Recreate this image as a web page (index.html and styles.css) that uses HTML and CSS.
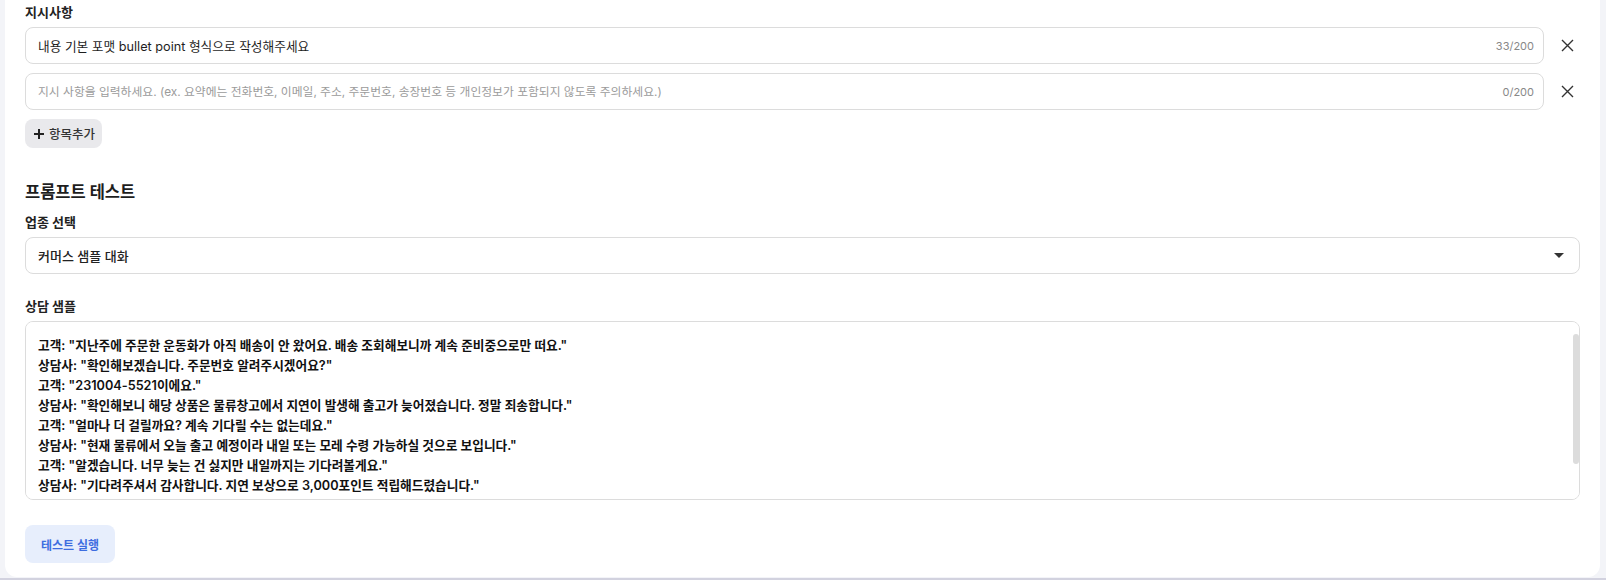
FILE: index.html
```html
<!DOCTYPE html>
<html lang="ko">
<head>
  <meta charset="UTF-8" />
  <meta name="viewport" content="width=device-width, initial-scale=1" />
  <title>프롬프트 설정</title>
  <link rel="stylesheet" href="styles.css">
</head>
<body>

<div class="page">
  <div class="card">

    <!-- 지시사항 -->
    <div class="field-label">지시사항</div>
    <div class="rule-list">
      <div class="rule-row">
        <div class="text-input">
          <input type="text" value="내용 기본 포맷 bullet point 형식으로 작성해주세요" />
          <span class="counter">33/200</span>
        </div>
        <button type="button" class="remove-btn" title="삭제">
          <svg width="13" height="13" viewBox="0 0 13 13"><path d="M1 1L12 12M12 1L1 12" stroke="#333" stroke-width="1.4" fill="none" /></svg>
        </button>
      </div>
      <div class="rule-row">
        <div class="text-input">
          <input type="text" placeholder="지시 사항을 입력하세요. (ex. 요약에는 전화번호, 이메일, 주소, 주문번호, 송장번호 등 개인정보가 포함되지 않도록 주의하세요.)" />
          <span class="counter">0/200</span>
        </div>
        <button type="button" class="remove-btn" title="삭제">
          <svg width="13" height="13" viewBox="0 0 13 13"><path d="M1 1L12 12M12 1L1 12" stroke="#333" stroke-width="1.4" fill="none" /></svg>
        </button>
      </div>
    </div>
    <button type="button" class="add-btn">
      <svg width="10" height="10" viewBox="0 0 10 10"><path d="M5 0V10M0 5H10" stroke="#222" stroke-width="2" fill="none" /></svg>
      <span>항목추가</span>
    </button>

    <!-- 프롬프트 테스트 -->
    <h2 class="section-title">프롬프트 테스트</h2>

    <div class="field-label">업종 선택</div>
    <div class="select-box">
      <span>커머스 샘플 대화</span>
      <svg width="10" height="5" viewBox="0 0 10 5"><path d="M0 0H10L5 5Z" fill="#333" /></svg>
    </div>

    <div class="field-label sample-label">상담 샘플</div>
    <div class="sample-wrap">
      <textarea class="sample-text" spellcheck="false">고객: "지난주에 주문한 운동화가 아직 배송이 안 왔어요. 배송 조회해보니까 계속 준비중으로만 떠요."
상담사: "확인해보겠습니다. 주문번호 알려주시겠어요?"
고객: "231004-5521이에요."
상담사: "확인해보니 해당 상품은 물류창고에서 지연이 발생해 출고가 늦어졌습니다. 정말 죄송합니다."
고객: "얼마나 더 걸릴까요? 계속 기다릴 수는 없는데요."
상담사: "현재 물류에서 오늘 출고 예정이라 내일 또는 모레 수령 가능하실 것으로 보입니다."
고객: "알겠습니다. 너무 늦는 건 싫지만 내일까지는 기다려볼게요."
상담사: "기다려주셔서 감사합니다. 지연 보상으로 3,000포인트 적립해드렸습니다."
</textarea>
      <span class="scroll-thumb"></span>
    </div>

    <button type="button" class="run-btn">테스트 실행</button>

  </div>
</div>

</body>
</html>
```

FILE: styles.css
```css
* {
  box-sizing: border-box;
}
body {
  margin: 0;
  font-family: Inter, "Noto Sans CJK KR", sans-serif;
  font-size: 13px;
  color: #222;
  background-color: #f3f4f8;
  overflow: hidden;
}
.page {
  height: 100vh;
  display: flex;
  flex-direction: column;
  padding: 0 6px 1px 5px;
  border-bottom: 2px solid #d2d2df;
}
.card {
  flex: 1;
  background-color: #fff;
  border-radius: 0 0 12px 12px;
  padding: 3px 20px 0 20px;
}
.field-label {
  font-size: 13px;
  font-weight: 700;
  line-height: 18px;
  color: #222;
  margin-bottom: 6px;
}

/* 지시사항 입력 목록 */
.rule-list {
  display: flex;
  flex-direction: column;
  gap: 9px;
}
.rule-row {
  display: flex;
  align-items: center;
  gap: 11px;
}
.text-input {
  flex: 1;
  height: 37px;
  display: flex;
  align-items: center;
  border: 1px solid #dcdcdc;
  border-radius: 8px;
  padding: 0 9px 0 12px;
  background-color: #fff;
}
.text-input input {
  flex: 1;
  border: none;
  outline: none;
  padding: 0;
  font-family: inherit;
  font-size: 12.7px;
  color: #1e1e1e;
  background: transparent;
}
.text-input input::placeholder {
  color: #9b9b9b;
  font-size: 11.8px;
}
.counter {
  font-size: 11px;
  color: #888;
  margin-left: 10px;
}
.remove-btn {
  width: 25px;
  height: 25px;
  padding: 0;
  border: none;
  background: transparent;
  display: flex;
  align-items: center;
  justify-content: center;
  cursor: pointer;
}
.add-btn {
  margin-top: 9px;
  height: 29px;
  display: flex;
  align-items: center;
  gap: 5px;
  padding: 0 7px 0 9px;
  border: none;
  border-radius: 8px;
  background-color: #e9e9ec;
  font-family: inherit;
  font-size: 12.5px;
  font-weight: 500;
  color: #333;
  cursor: pointer;
}

/* 프롬프트 테스트 */
.section-title {
  margin: 32px 0 8px 0;
  font-size: 16.5px;
  font-weight: 700;
  line-height: 25px;
  color: #1e1e1e;
}
.select-box {
  height: 37px;
  display: flex;
  align-items: center;
  justify-content: space-between;
  border: 1px solid #dcdcdc;
  border-radius: 8px;
  padding: 0 15px 0 12px;
  font-size: 13px;
  font-weight: 500;
  color: #222;
}
.sample-label {
  margin-top: 23px;
}
.sample-wrap {
  position: relative;
}
.sample-text {
  display: block;
  width: 100%;
  height: 179px;
  margin: 0;
  padding: 14px 12px 11px 12px;
  border: 1px solid #dcdcdc;
  border-radius: 8px;
  font-family: inherit;
  font-size: 12.7px;
  font-weight: 600;
  line-height: 20px;
  color: #111;
  resize: none;
  outline: none;
  overflow-y: auto;
  scrollbar-width: none;
}
/* 스크롤바 모양 */
.scroll-thumb {
  position: absolute;
  top: 13px;
  right: 1px;
  width: 6px;
  height: 130px;
  border-radius: 3px;
  background-color: #dcdcdc;
}
.run-btn {
  margin-top: 25px;
  height: 38px;
  padding: 0 16px;
  border: none;
  border-radius: 8px;
  background-color: #e7eefc;
  color: #3d6de0;
  font-family: inherit;
  font-size: 12px;
  font-weight: 700;
  cursor: pointer;
}
```
